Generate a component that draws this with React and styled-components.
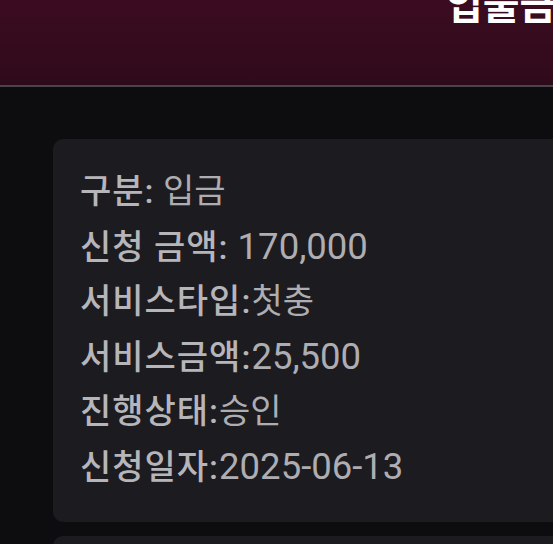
import React from 'react';
import styled, { createGlobalStyle } from 'styled-components';

const GlobalStyle = createGlobalStyle`
	html, body {
		margin: 0;
		padding: 0;
		background: #0d0d0f;
		overflow: hidden;
	}
	body {
		font-family: Roboto, "Noto Sans CJK KR", sans-serif;
	}
`;

const Page = styled.div`
	width: 553px;
	height: 544px;
	overflow: hidden;
	background: #0d0d0f;
`;

const Header = styled.header`
	height: 85px;
	display: flex;
	align-items: flex-start;
	padding-left: 446px;
	background: linear-gradient(180deg, #3b0c21 0%, #2f0a1a 100%);
	border-bottom: 2px solid #47444a;
	overflow: hidden;
`;

const Title = styled.h1`
	margin: -18px 0 0 0;
	font-family: "Noto Sans CJK KR", sans-serif;
	font-size: 40px;
	font-weight: 700;
	line-height: 1;
	color: #ffffff;
	white-space: nowrap;
`;

const List = styled.main`
	display: flex;
	flex-direction: column;
	gap: 14px;
	padding: 52px 0 0 53px;
	margin-right: -60px;
`;

const Card = styled.section`
	background: #1c1b20;
	border-radius: 10px;
	padding: 25px 27px 28px;
`;

const Row = styled.div`
	font-size: 34px;
	line-height: 55px;
	height: 55px;
	color: #aeadb2;
	white-space: nowrap;
`;

const Label = styled.span`
	font-weight: 500;
	letter-spacing: 1px;
	color: #b6b5ba;
`;

const Value = styled.span`
	font-weight: 400;
	font-size: ${props => (props.$num ? '36.5px' : '34px')};
`;

const deposit = [
	{ label: '구분:', value: ' 입금' },
	{ label: '신청 금액:', value: ' 170,000', num: true },
	{ label: '서비스타입:', value: '첫충' },
	{ label: '서비스금액:', value: '25,500', num: true },
	{ label: '진행상태:', value: '승인' },
	{ label: '신청일자:', value: '2025-06-13', num: true },
];

export default function App() {
	return (
		<Page>
			<GlobalStyle />
			<Header>
				<Title>입출금</Title>
			</Header>
			<List>
				<Card>
					{deposit.map(row => (
						<Row key={row.label}>
							<Label>{row.label}</Label>
							<Value $num={row.num}>{row.value}</Value>
						</Row>
					))}
				</Card>
				<Card>
					<Row>
						<Label>구분:</Label>
						<Value> 출금</Value>
					</Row>
				</Card>
			</List>
		</Page>
	);
}
